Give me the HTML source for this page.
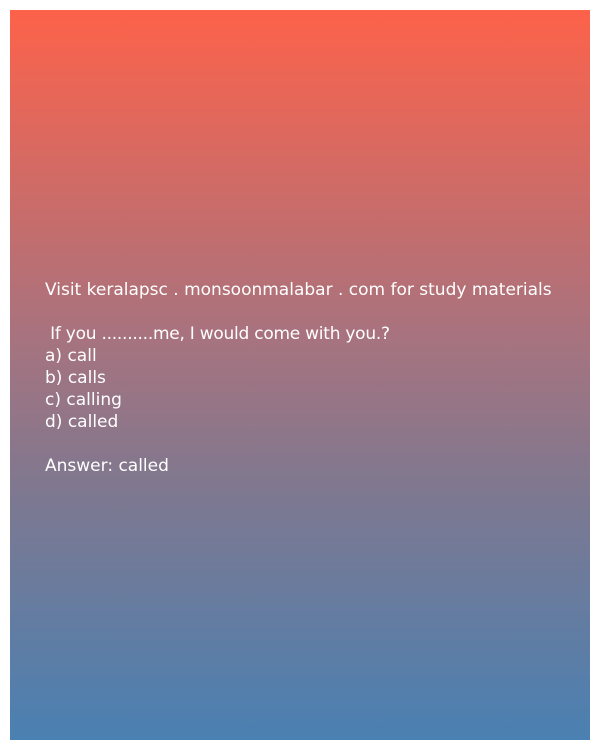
<!DOCTYPE html>
<html><head><meta charset="utf-8"><style>
html,body{margin:0;padding:0;background:#fff;width:600px;height:750px;overflow:hidden}
.box{position:absolute;left:10px;top:10px;width:580px;height:730px;background:linear-gradient(to bottom,#fd624a 0%,#a7737f 45%,#80788f 65%,#4a80b2 100%)}
.t{position:absolute;left:35px;top:269px;color:#fff;font-family:"DejaVu Sans","Liberation Sans",sans-serif;font-size:17px;line-height:22px;white-space:pre;letter-spacing:0px}
.s{letter-spacing:-0.25px}
</style></head><body>
<div class="box"><div class="t">Visit keralapsc . monsoonmalabar . com for study materials

<span class="s"> If you ..........me, I would come with you.?</span>
a) call
b) calls
c) calling
d) called

Answer: called</div></div>
</body></html>
